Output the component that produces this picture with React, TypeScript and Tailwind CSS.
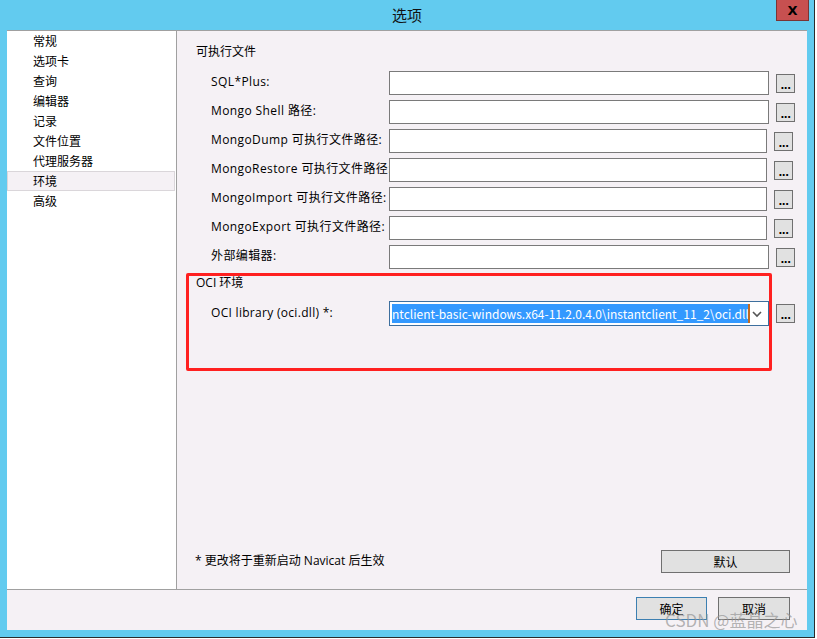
import React from "react";

const paths = [
  { label: "SQL*Plus:", wide: true },
  { label: "Mongo Shell 路径:", wide: true },
  { label: "MongoDump 可执行文件路径:", wide: false },
  { label: "MongoRestore 可执行文件路径:", wide: false },
  { label: "MongoImport 可执行文件路径:", wide: false },
  { label: "MongoExport 可执行文件路径:", wide: false },
  { label: "外部编辑器:", wide: true },
];

const menu = ["常规", "选项卡", "查询", "编辑器", "记录", "文件位置", "代理服务器", "环境", "高级"];

function DotsButton() {
  return (
    <button className="w-[19px] h-[19px] bg-[#E1E1E1] border border-[#707070] flex items-end justify-center pb-[3px] shrink-0">
      <span className="text-[10px] leading-[6px] font-bold tracking-[-0.5px] text-black font-['DejaVu_Sans',sans-serif]">...</span>
    </button>
  );
}

export default function App() {
  return (
    <div className="w-[817px] h-[639px] bg-white relative font-['Open_Sans','Noto_Sans_CJK_SC',sans-serif] text-[12px] text-black overflow-hidden">
      <div className="w-[815px] h-[638px] bg-[#62CBEF] border-r border-b border-[#2b2b2b] flex flex-col">
        {/* Title bar */}
        <div className="h-[30px] relative flex items-center justify-center">
          <span className="text-[15px] leading-[18px] text-[#111] font-['Noto_Sans_CJK_SC',sans-serif]">选项</span>
          <div className="absolute left-[776px] top-0 w-[33px] h-[21px] bg-[#C75050] border border-t-0 border-[#7A3434] flex items-center justify-center">
            <span className="text-[13px] font-bold leading-none font-['DejaVu_Sans',sans-serif]">X</span>
          </div>
        </div>

        {/* Client area */}
        <div className="ml-[7px] w-[800px] h-[600px] border-t border-[#A0A0A0] bg-[#F5F1F5] flex flex-col">
          <div className="flex h-[558px]">
            {/* Sidebar */}
            <div className="w-[170px] bg-white border-r border-[#A0A0A0] flex flex-col font-['Noto_Sans_CJK_SC',sans-serif]">
              {menu.map((m) => (
                <div
                  key={m}
                  className={
                    m === "环境"
                      ? "h-[20px] pl-[25px] flex items-center leading-[14px] bg-[#F5F1F5] border border-[#DAD6DA] mr-[1px]"
                      : "h-[20px] pl-[26px] flex items-center leading-[14px]"
                  }
                >
                  {m}
                </div>
              ))}
            </div>

            {/* Content */}
            <div className="flex-1 relative flex flex-col pl-[19px] pt-[13px]">
              <div className="h-[16px] leading-[16px]">可执行文件</div>
              <div className="mt-[11px] flex flex-col gap-[5px]">
                {paths.map((p) => (
                  <div key={p.label} className="flex items-center h-[24px]">
                    <div className="w-[193px] pl-[15px] whitespace-nowrap overflow-hidden leading-[16px] -mt-[3px] tracking-[0.4px]">{p.label}</div>
                    <div className={(p.wide ? "w-[380px]" : "w-[378px]") + " h-[24px] bg-white border border-[#7A7A7A]"} />
                    <div className="ml-[7px]">
                      <DotsButton />
                    </div>
                  </div>
                ))}
              </div>

              <div className="mt-[6px] h-[16px] leading-[16px]">OCI 环境</div>
              <div className="mt-[10px] flex items-center h-[25px]">
                <div className="w-[193px] pl-[15px] whitespace-nowrap leading-[16px] -mt-[2px] tracking-[0.3px]">OCI library (oci.dll) *:</div>
                <div className="w-[380px] h-[25px] bg-white border border-[#3D6F9E] flex items-center pl-[2px] pr-[4px] overflow-hidden">
                  <div className="w-[358px] h-[19px] bg-[#3399FF] text-white whitespace-nowrap overflow-hidden flex items-center leading-[14px] border-r-2 border-[#C06A22] font-['Noto_Sans_CJK_SC',sans-serif]">
                    ntclient-basic-windows.x64-11.2.0.4.0\instantclient_11_2\oci.dll
                  </div>
                  <svg width="14" height="10" viewBox="0 0 14 10" className="ml-auto">
                    <path d="M3 3 L7 7 L11 3" fill="none" stroke="#555" strokeWidth="1.6" />
                  </svg>
                </div>
                <div className="ml-[7px]">
                  <DotsButton />
                </div>
              </div>

              {/* Annotation box */}
              <div className="absolute left-[9px] top-[242px] w-[586px] h-[98px] border-[3px] border-[#FF2020] rounded-[2px]" />

              <div className="mt-auto mb-[16px] flex items-center pr-[17px] -ml-[1px]">
                <span className="leading-[16px] -mt-[1px]">* 更改将于重新启动 Navicat 后生效</span>
                <button className="ml-auto w-[129px] h-[23px] bg-[#E1E1E1] border border-[#707070] leading-[14px] font-['Noto_Sans_CJK_SC',sans-serif]">默认</button>
              </div>
            </div>
          </div>

          {/* Footer */}
          <div className="flex-1 border-t border-[#A0A0A0] flex items-start justify-end pt-[7px] pr-[17px] gap-[11px]">
            <button className="w-[71px] h-[23px] bg-[#E1E1E1] border border-[#3C7FB1] leading-[14px] font-['Noto_Sans_CJK_SC',sans-serif]">确定</button>
            <button className="w-[72px] h-[23px] bg-[#E1E1E1] border border-[#707070] leading-[14px] font-['Noto_Sans_CJK_SC',sans-serif]">取消</button>
          </div>
        </div>
      </div>

      {/* Watermark */}
      <div className="absolute left-[665px] top-[609px] text-[17px] leading-[22px] text-[rgba(150,150,150,0.7)] whitespace-nowrap font-['Noto_Sans_CJK_SC',sans-serif]">
        CSDN @蓝晶之心
      </div>
    </div>
  );
}
